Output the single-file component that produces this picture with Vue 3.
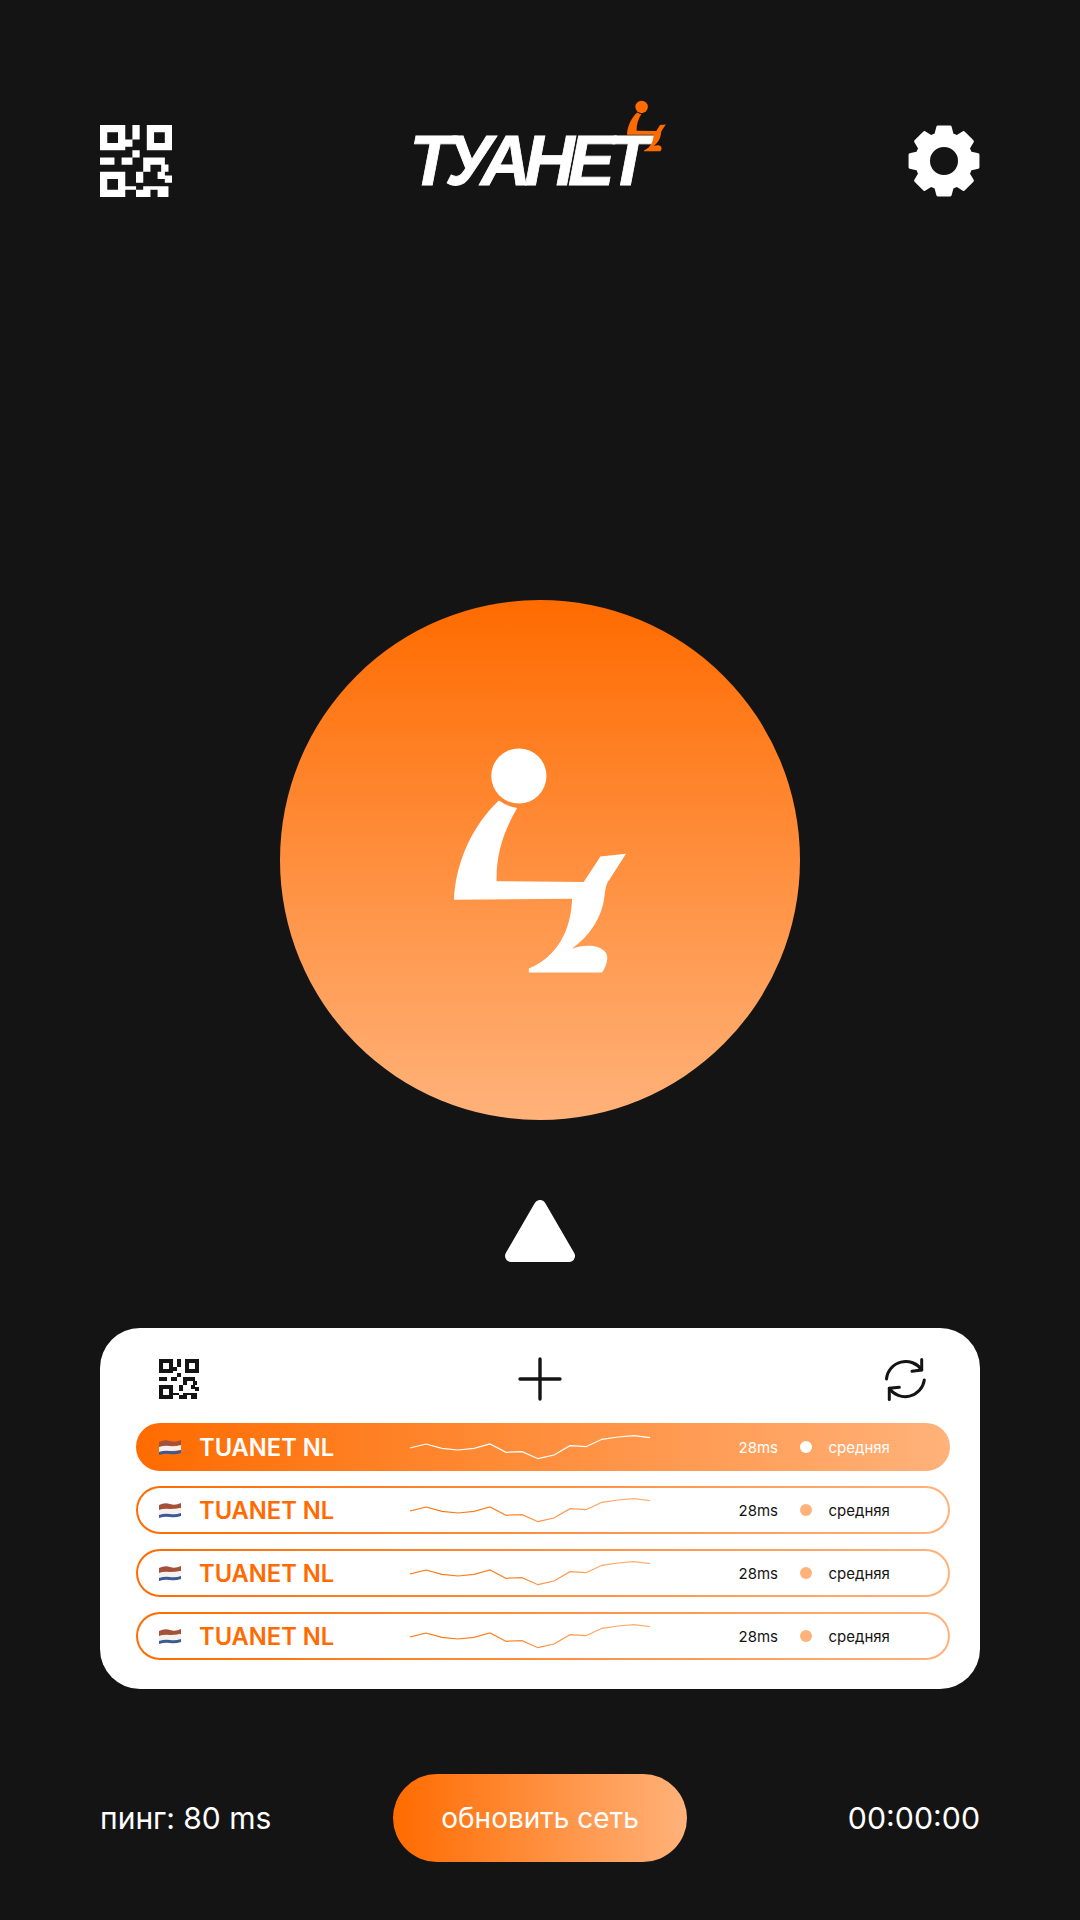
<template>
  <div class="page">
    <header class="top">
      <svg class="qr" viewBox="0 0 20 20"><path :d="qrPath" fill="#fff" /></svg>
      <div class="logo">
        <span class="logo-text">ТУАНЕТ</span>
        <svg class="logo-figure" viewBox="100 80 520 680">
          <circle cx="295" cy="166" r="83" fill="#ff6b00" />
          <path :d="figurePath" fill="#ff6b00" />
        </svg>
      </div>
      <svg class="gear" viewBox="0 0 72 72"><path :d="gearPath" fill="#fff" fill-rule="evenodd" stroke="#fff" stroke-width="3" stroke-linejoin="round" /></svg>
    </header>

    <div class="power">
      <svg class="power-figure" viewBox="100 80 520 680">
        <circle cx="295" cy="166" r="83" fill="#fff" />
        <path :d="figurePath" fill="#fff" />
      </svg>
    </div>

    <svg class="arrow" viewBox="0 0 70 63"><path d="M35 6 L64 56 H6 Z" fill="#fff" stroke="#fff" stroke-width="12" stroke-linejoin="round" /></svg>

    <section class="card">
      <div class="toolbar">
        <svg class="qr-small" viewBox="0 0 20 20"><path :d="qrPath" fill="#141414" /></svg>
        <svg class="plus" viewBox="0 0 44 44"><path d="M2 22 H42 M22 2 V42" stroke="#141414" stroke-width="3.4" stroke-linecap="round" /></svg>
        <svg class="sync" viewBox="0 0 41 43" fill="none" stroke="#141414" stroke-width="3" stroke-linecap="round" stroke-linejoin="round">
          <path d="M1.5 21 A19.3 19.3 0 0 1 36.7 12" />
          <path d="M36.7 1.5 V12 L27 13.3" />
          <path d="M39.3 22 A19.3 19.3 0 0 1 4.3 30.3" />
          <path d="M4.3 41.5 V30.3 L14.3 29.3" />
        </svg>
      </div>

      <div v-for="(row, i) in rows" :key="i" class="row" :class="{ active: row.active }">
        <svg class="flag" viewBox="0 0 22 16">
          <path d="M0 3 Q6 0 11 2 T22 1 V6 Q16 7 11 7 T0 8 Z" fill="#a4503a" />
          <path d="M0 8 Q6 6 11 7 T22 6 V11 Q16 12 11 12 T0 13 Z" fill="#f4f1ee" />
          <path d="M0 13 Q6 11 11 12 T22 11 V14 Q16 16 11 15 T0 16 Z" fill="#3b5a94" />
        </svg>
        <span class="name">{{ row.name }}</span>
        <svg class="spark" viewBox="0 0 243 44" fill="none">
          <defs>
            <linearGradient :id="'spark' + i" x1="0" y1="0" x2="243" y2="0" gradientUnits="userSpaceOnUse">
              <stop offset="0" stop-color="#ff6b00" />
              <stop offset="1" stop-color="#ffb27a" />
            </linearGradient>
          </defs>
          <polyline :points="sparkPoints" :stroke="row.active ? '#fff' : 'url(#spark' + i + ')'" stroke-width="1.2" />
        </svg>
        <span class="ms">{{ row.ms }}</span>
        <span class="dot"></span>
        <span class="speed">{{ row.speed }}</span>
      </div>
    </section>

    <footer class="bottom">
      <span class="stat">пинг: 80 ms</span>
      <button class="refresh">обновить сеть</button>
      <span class="stat time">00:00:00</span>
    </footer>
  </div>
</template>

<script setup>
const rows = [
  { name: "TUANET NL", ms: "28ms", speed: "средняя", active: true },
  { name: "TUANET NL", ms: "28ms", speed: "средняя", active: false },
  { name: "TUANET NL", ms: "28ms", speed: "средняя", active: false },
  { name: "TUANET NL", ms: "28ms", speed: "средняя", active: false },
];

const qrRows = [
  "11111110011001111111",
  "11111110011001111111",
  "11000110011001100011",
  "11000110011001100011",
  "11000111100001100011",
  "11111111100001111111",
  "11111110000001111111",
  "00000000011000000000",
  "00000000011000000000",
  "11110011100011111100",
  "11110011100011111100",
  "00000000000011000110",
  "00000000000011000110",
  "11111110001100001100",
  "11111110001100001111",
  "11000110001100000011",
  "11000110000000000000",
  "11000111110011111110",
  "11111110001111001110",
  "11111110001111001110",
];

const qrPath = qrRows
  .flatMap((line, y) =>
    [...line].map((cell, x) => (cell === "1" ? `M${x} ${y}h1.02v1.02h-1.02z` : ""))
  )
  .join("");

const figurePath =
  "M235 240 Q260 258 290 262 C250 330 226 400 228 482 L490 485 L540 408 L617 400 L567 478 C556 490 555 510 552 530 C545 590 510 645 455 685 C490 672 535 672 555 695 C566 710 560 735 545 757 L325 757 L325 745 C410 710 452 630 455 535 L100 538 C105 420 160 310 235 240 Z";

function gear() {
  let d = "";
  for (let k = 0; k < 8; k++) {
    const a = (k * Math.PI) / 4 - Math.PI / 2;
    const pts = [
      [27.5, a - 0.3],
      [34.5, a - 0.18],
      [34.5, a + 0.18],
      [27.5, a + 0.3],
    ];
    for (const [r, t] of pts) {
      d += (d ? "L" : "M") + (36 + r * Math.cos(t)).toFixed(2) + " " + (36 + r * Math.sin(t)).toFixed(2);
    }
  }
  return d + "Z M36 20.5 A15.5 15.5 0 1 0 36 51.5 A15.5 15.5 0 1 0 36 20.5 Z";
}
const gearPath = gear();

const sparkY = [23, 19, 23.3, 25, 23.3, 19, 27.3, 26.7, 33.7, 30, 20.7, 21.7, 14.3, 12, 10.7, 12.7];
const sparkPoints = sparkY.map((y, i) => `${i * 16 + 1},${y}`).join(" ");
</script>

<style>
html,
body {
  margin: 0;
  background: #141414;
}
</style>

<style scoped>
.page {
  box-sizing: border-box;
  width: 1080px;
  height: 1920px;
  padding: 125px 100px 0;
  background: #141414;
  font-family: Inter, "Liberation Sans", sans-serif;
  display: flex;
  flex-direction: column;
  align-items: center;
}

.top {
  align-self: stretch;
  display: flex;
  justify-content: space-between;
  align-items: center;
  height: 72px;
}

.qr,
.gear {
  width: 72px;
  height: 72px;
}

.logo {
  position: relative;
  width: 251px;
  height: 72px;
  display: flex;
  align-items: center;
}

.logo-text {
  margin-left: -5px;
  font-family: "Liberation Sans", Arial, sans-serif;
  font-weight: 700;
  font-style: italic;
  font-size: 70px;
  letter-spacing: -6.9px;
  line-height: 72px;
  color: #fff;
  -webkit-text-stroke: 0.8px #fff;
}

.logo-figure {
  position: absolute;
  left: 212px;
  top: -25px;
  width: 39px;
  height: 52px;
}

.power {
  margin-top: 403px;
  width: 520px;
  height: 520px;
  border-radius: 50%;
  background: linear-gradient(180deg, #ff6b00, #ffb27a);
  display: flex;
  align-items: center;
  justify-content: center;
}

.power-figure {
  width: 173px;
  height: 227px;
}

.arrow {
  margin-top: 80px;
  width: 70px;
  height: 63px;
}

.card {
  box-sizing: border-box;
  margin-top: 65px;
  align-self: stretch;
  height: 361px;
  padding: 29px 30px 0 36px;
  background: #fff;
  border-radius: 40px;
  display: flex;
  flex-direction: column;
  gap: 15px;
}

.toolbar {
  height: 44px;
  margin-bottom: 7px;
  padding: 0 24px 0 23px;
  display: flex;
  justify-content: space-between;
  align-items: center;
}

.qr-small {
  width: 40px;
  height: 40px;
}

.plus {
  width: 44px;
  height: 44px;
  margin-right: 5px;
}

.sync {
  width: 41px;
  height: 43px;
}

.row {
  box-sizing: border-box;
  height: 48px;
  padding-left: 21px;
  border: 2px solid transparent;
  border-radius: 24px;
  background: linear-gradient(#fff, #fff) padding-box, linear-gradient(90deg, #ff6b00, #ffb27a) border-box;
  display: flex;
  align-items: center;
  color: #141414;
}

.row.active {
  background: linear-gradient(90deg, #ff6b00, #ffb27a) border-box;
  color: #fff;
}

.flag {
  width: 22px;
  height: 16px;
  margin-right: 18px;
  flex: none;
}

.name {
  width: 210px;
  flex: none;
  font-size: 23.7px;
  font-weight: 600;
  color: #ff6b00;
}

.active .name {
  color: #fff;
}

.spark {
  width: 243px;
  height: 44px;
  flex: none;
}

.ms {
  margin-left: 86.5px;
  width: 61.5px;
  flex: none;
  font-size: 15px;
}

.dot {
  width: 12px;
  height: 12px;
  border-radius: 50%;
  background: #ffb27a;
  flex: none;
}

.active .dot {
  background: #fff;
}

.speed {
  margin-left: 16.5px;
  font-size: 15px;
}

.bottom {
  margin-top: 85px;
  align-self: stretch;
  display: grid;
  grid-template-columns: 1fr auto 1fr;
  align-items: center;
}

.stat {
  font-size: 30px;
  color: #fff;
}

.time {
  justify-self: end;
  font-size: 30.3px;
}

.refresh {
  width: 294px;
  height: 88px;
  border: 0;
  padding: 0;
  border-radius: 44px;
  background: linear-gradient(90deg, #ff6b00, #ffb27a);
  color: #fff;
  font-family: inherit;
  font-size: 28px;
}
</style>
